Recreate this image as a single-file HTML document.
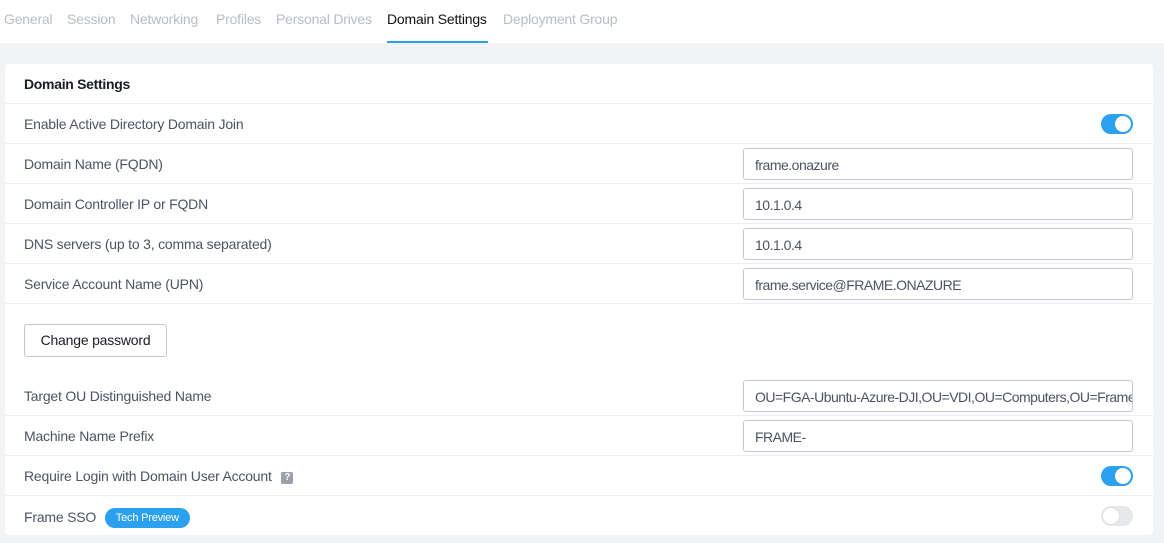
<!DOCTYPE html>
<html><head><style>
*{box-sizing:border-box;margin:0;padding:0}
body{width:1164px;height:543px;background:#f2f3f5;font-family:"Liberation Sans",sans-serif;font-size:14px;color:#4d5361;position:relative;overflow:hidden}
.tabs{position:absolute;left:0;top:0;width:1164px;height:43px;background:#fff}
.tab{position:absolute;top:11px;font-size:14px;color:#b8bcc4;letter-spacing:-0.2px}
.tab.act{color:#111}
.ul{position:absolute;left:387px;top:41px;width:101px;height:2px;background:#2aa0ee}
.card{position:absolute;left:5px;top:64px;width:1148px;height:471px;background:#fff;border-radius:4px}
.row{position:absolute;left:0;width:1148px;height:40px;border-top:1px solid #eceef1}
.lbl{position:absolute;left:19px;top:12px;letter-spacing:-0.2px}
.inp{position:absolute;left:738px;top:4px;width:390px;height:32px;border:1px solid #c3c8d0;border-radius:3px;padding:8px 11px;color:#4d5361;white-space:nowrap;overflow:hidden;letter-spacing:-0.5px}
.tg{position:absolute;left:1096px;top:10px;width:32px;height:20px;border-radius:10px;background:#2aa0ee}
.tg::after{content:"";position:absolute;right:2px;top:2px;width:16px;height:16px;border-radius:50%;background:#fff}
.tg.off{background:#e6e8eb}
.tg.off::after{left:2px;right:auto;box-shadow:0 0 1px #bbb}
</style></head><body>
<div class="tabs">
<span class="tab" style="left:4px">General</span>
<span class="tab" style="left:67px">Session</span>
<span class="tab" style="left:130px">Networking</span>
<span class="tab" style="left:216px">Profiles</span>
<span class="tab" style="left:276px">Personal Drives</span>
<span class="tab act" style="left:387px">Domain Settings</span>
<span class="tab" style="left:503px">Deployment Group</span>
<div class="ul"></div>
</div>
<div class="card">
<div style="position:absolute;left:19px;top:12px;font-weight:bold;color:#1a1d24;letter-spacing:-0.3px">Domain Settings</div>
<div class="row" style="top:39px"><span class="lbl">Enable Active Directory Domain Join</span><div class="tg"></div></div>
<div class="row" style="top:79px"><span class="lbl">Domain Name (FQDN)</span><div class="inp">frame.onazure</div></div>
<div class="row" style="top:119px"><span class="lbl">Domain Controller IP or FQDN</span><div class="inp">10.1.0.4</div></div>
<div class="row" style="top:159px"><span class="lbl">DNS servers (up to 3, comma separated)</span><div class="inp">10.1.0.4</div></div>
<div class="row" style="top:199px"><span class="lbl">Service Account Name (UPN)</span><div class="inp">frame.service@FRAME.ONAZURE</div></div>
<div class="row" style="top:239px;height:72px"><div style="position:absolute;left:19px;top:20px;width:143px;height:33px;border:1px solid #c3c8d0;border-radius:3px;text-align:center;line-height:31px;color:#1a1d24;letter-spacing:-0.2px">Change password</div></div>
<div class="row" style="top:312px;border-top:none"><span class="lbl">Target OU Distinguished Name</span><div class="inp">OU=FGA-Ubuntu-Azure-DJI,OU=VDI,OU=Computers,OU=Frame</div></div>
<div class="row" style="top:351px"><span class="lbl">Machine Name Prefix</span><div class="inp">FRAME-</div></div>
<div class="row" style="top:391px"><span class="lbl">Require Login with Domain User Account <span style="display:inline-block;width:12px;height:12px;background:#9aa0aa;border-radius:2px;color:#fff;font-size:10px;font-weight:bold;text-align:center;line-height:12px;margin-left:6px;vertical-align:1px">?</span></span><div class="tg"></div></div>
<div class="row" style="top:431px"><span class="lbl">Frame SSO <span style="display:inline-block;margin-left:5px;background:#2aa0ee;color:#fff;font-size:11px;padding:0 11px;height:20px;line-height:20px;border-radius:10px;vertical-align:1px">Tech Preview</span></span><div class="tg off"></div></div>
</div>
</body></html>
